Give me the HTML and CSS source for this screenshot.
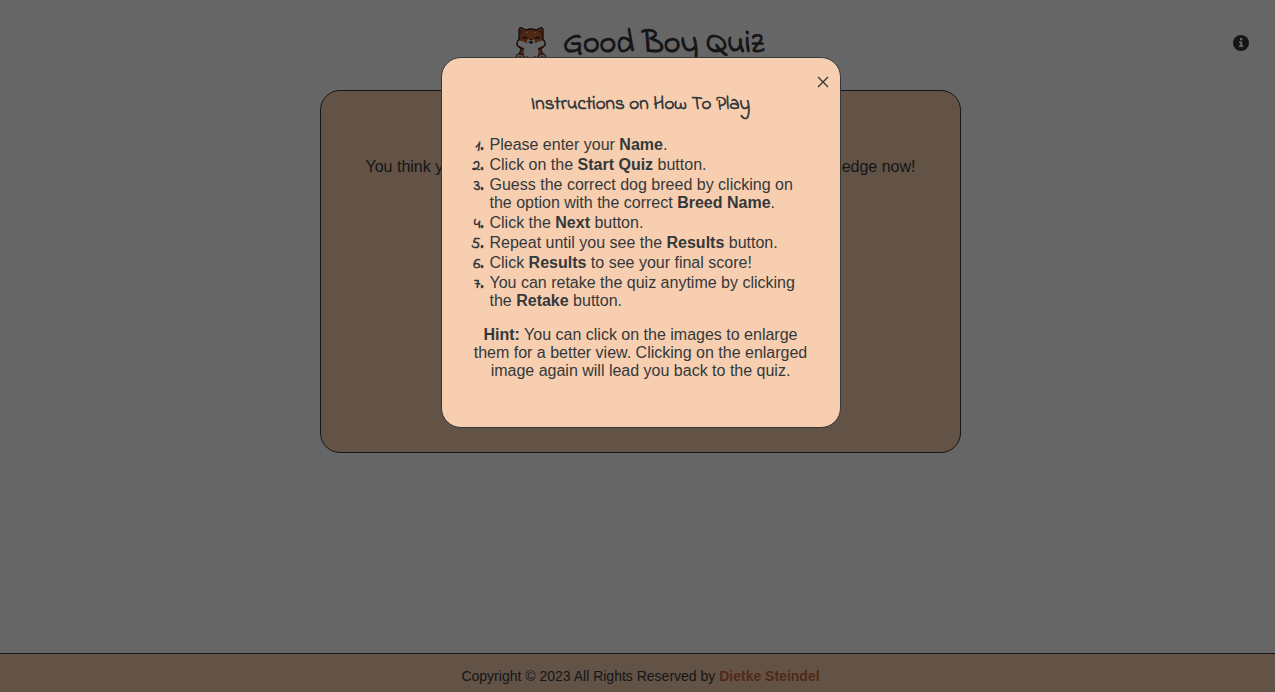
FILE: index.html
```html
<!DOCTYPE html>
<html lang="en">
<head>
  <meta charset="utf-8">
  <meta name="viewport" content="width=device-width, initial-scale=1">
  <title>Good Boy Quiz</title>
  <link rel="stylesheet" href="styles.css">
</head>
<body>
  <header class="header">
    <svg class="logo" viewBox="0 0 32 36" aria-hidden="true">
      <path d="M7 20 4 27 5 35H27L28 27 25 20Z" fill="#c66532" stroke="#222"/>
      <path d="M4 12V3Q4 0 7 1l4 2Q16 1 21 3l4-2q3-1 3 2v9Q31 16 30 18 27 22 22 22H10Q5 22 2 18 1 16 4 12Z" fill="#c66532" stroke="#222" stroke-width="1.3"/>
      <path d="M4 13.500Q2 16 3 18q3 2 6 3-1 6 1 9v5h12v-5q2-3 1-9 3-1 6-3 1-2-1-4.500-4 0-7 2.500-5 2-10 0-3-2.500-7-2.500Z" fill="#fff"/>
      <path d="M5 3v5l4-4ZM27 3v5l-4-4Z" fill="#8f4828"/>
      <path d="m11 6 2-1m8 1-2-1" stroke="#f7ceb0"/>
      <path d="M7 11.500q3-2 5 0M20 11.500q3-2 5 0" fill="none" stroke="#222" stroke-width="1.5"/>
      <ellipse cx="16" cy="15" rx="4" ry="3" fill="#fff"/>
      <path d="M14 12h4l-2 2ZM13 14q3 6 6 0-2 1-3 0-1 1-3 0Z" fill="#222"/>
      <path d="M12 29v5m8-5v5" stroke="#222"/>
      <path d="M1 34q-1-8 4-7 5 0 4 7ZM31 34q1-8-4-7-5 0-4 7Z" fill="#f7c9a9" stroke="#222"/>
      <path d="M4 29h2v3H4ZM26 29h2v3h-2Z" fill="#c66532"/>
    </svg>
    <h1 class="title">Good Boy Quiz</h1>
    <button class="info" type="button" aria-label="How to play">
      <svg viewBox="0 0 16 16" aria-hidden="true">
        <circle cx="8" cy="8" r="8" fill="currentColor"/>
        <path d="M7 3h2.300v2.200H7ZM6 6.500h3.300v4H10.300V12H6v-1.500h1.200V8H6Z" fill="#fff"/>
      </svg>
    </button>
  </header>
  <main class="main">
    <section class="card">
      <p class="intro">You think you know every breed? Come and test your canine knowledge now!</p>
    </section>
  </main>
  <footer class="footer">
    <p>Copyright © 2023 All Rights Reserved by <a class="author" href="#">Dietke Steindel</a></p>
  </footer>
  <div class="overlay">
    <section class="modal" role="dialog" aria-modal="true" aria-labelledby="modal-title">
      <button class="close" type="button" aria-label="Close">
        <svg viewBox="0 0 12 12" aria-hidden="true"><path d="m1 1 10 10M11 1 1 11" fill="none" stroke="currentColor" stroke-width="1.4"/></svg>
      </button>
      <h2 class="modal-title" id="modal-title">Instructions on How To Play</h2>
      <ol class="steps">
        <li>Please enter your <strong>Name</strong>.</li>
        <li>Click on the <strong>Start Quiz</strong> button.</li>
        <li>Guess the correct dog breed by clicking on the option with the correct <strong>Breed Name</strong>.</li>
        <li>Click the <strong>Next</strong> button.</li>
        <li>Repeat until you see the <strong>Results</strong> button.</li>
        <li>Click <strong>Results</strong> to see your final score!</li>
        <li>You can retake the quiz anytime by clicking the <strong>Retake</strong> button.</li>
      </ol>
      <p class="hint"><strong>Hint:</strong> You can click on the images to enlarge them for a better view. Clicking on the enlarged image again will lead you back to the quiz.</p>
    </section>
  </div>
</body>
</html>
```
FILE: styles.css
```css
:root {
  --ink: #33393b;
  --peach: #f7ceb0;
  --hand: "Indie Flower", Lato, sans-serif;
}

* { box-sizing: border-box; }

body {
  display: flex;
  flex-direction: column;
  min-height: 100vh;
  margin: 0;
  background: #fff;
  color: var(--ink);
  font: 16px/18px "Liberation Sans", Arial, sans-serif;
}

h1, h2, p, ol { margin: 0; }

button {
  padding: 0;
  border: 0;
  background: none;
  color: inherit;
  cursor: pointer;
}

button svg { display: block; width: 100%; }

.header {
  position: relative;
  display: flex;
  align-items: center;
  justify-content: center;
  gap: 16px;
  height: 90px;
  padding: 0 0 0 4px;
}

.logo { width: 32px; height: 36px; }

.title { font: bold 32px/40px var(--hand); }

.info {
  position: absolute;
  top: 35px;
  right: 26px;
  width: 16px;
  height: 16px;
}

.main {
  display: flex;
  flex: 1;
  flex-direction: column;
  align-items: center;
  padding: 0 0 40px 6px;
}

.card {
  width: 100%;
  max-width: 641px;
  min-height: 363px;
  padding: 67px 32px;
  border: 1px solid var(--ink);
  border-radius: 20px;
  background: var(--peach);
  text-align: center;
}

.footer {
  padding: 14px 0 7px 6px;
  border-top: 1px solid var(--ink);
  background: var(--peach);
  font-size: 14px;
  line-height: 17px;
  text-align: center;
}

.author {
  color: #c8693c;
  font-weight: bold;
  text-decoration: none;
}

.overlay {
  position: fixed;
  inset: 0;
  display: flex;
  align-items: flex-start;
  justify-content: center;
  padding: 57px 0 0 6px;
  background: rgba(0, 0, 0, 0.6);
}

.modal {
  position: relative;
  width: 400px;
  padding: 33px 32px 47px;
  border: 1px solid var(--ink);
  border-radius: 20px;
  background: var(--peach);
}

.close {
  position: absolute;
  top: 18px;
  right: 11px;
  width: 12px;
}

.modal-title {
  margin-bottom: 15px;
  font: bold 19px/28px var(--hand);
  text-align: center;
}

.steps {
  margin-bottom: 16px;
  padding-left: 14px;
}

.steps li { padding-left: 2px; }

.steps li::marker { font: bold 16px var(--hand); }

.hint { text-align: center; }
```
